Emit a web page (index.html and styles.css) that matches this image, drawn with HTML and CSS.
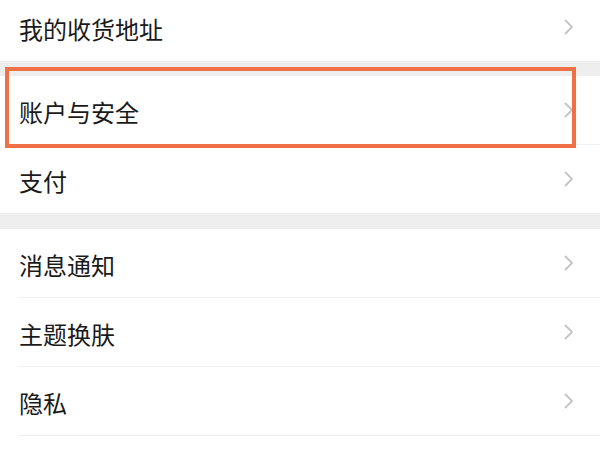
FILE: index.html
```html
<!DOCTYPE html>
<html lang="zh-CN">
<head>
<meta charset="utf-8">
<title>设置</title>
<link rel="stylesheet" href="styles.css">
</head>
<body>
<div class="page">
  <div class="group first">
    <div class="row"><div class="cell"><span class="label">我的收货地址</span><svg class="chev" width="10" height="16" viewBox="0 0 10 16"><polyline points="1.5,1.5 8,8 1.5,14.5"/></svg></div></div>
  </div>
  <div class="gap"></div>
  <div class="group">
    <div class="row"><div class="cell line"><span class="label">账户与安全</span><svg class="chev" width="10" height="16" viewBox="0 0 10 16"><polyline points="1.5,1.5 8,8 1.5,14.5"/></svg></div></div>
    <div class="row"><div class="cell"><span class="label">支付</span><svg class="chev" width="10" height="16" viewBox="0 0 10 16"><polyline points="1.5,1.5 8,8 1.5,14.5"/></svg></div></div>
  </div>
  <div class="gap gap2"></div>
  <div class="group">
    <div class="row"><div class="cell line"><span class="label">消息通知</span><svg class="chev" width="10" height="16" viewBox="0 0 10 16"><polyline points="1.5,1.5 8,8 1.5,14.5"/></svg></div></div>
    <div class="row"><div class="cell line"><span class="label">主题换肤</span><svg class="chev" width="10" height="16" viewBox="0 0 10 16"><polyline points="1.5,1.5 8,8 1.5,14.5"/></svg></div></div>
    <div class="row"><div class="cell line"><span class="label">隐私</span><svg class="chev" width="10" height="16" viewBox="0 0 10 16"><polyline points="1.5,1.5 8,8 1.5,14.5"/></svg></div></div>
  </div>
  <div class="highlight"></div>
</div>
</body>
</html>
```
FILE: styles.css
```css
html, body {
  margin: 0;
  padding: 0;
  background: #ffffff;
  overflow: hidden;
}
.page {
  position: relative;
  width: 600px;
  height: 450px;
  font-family: "Noto Sans CJK SC", "Noto Sans", sans-serif;
}
.group {
  background: #ffffff;
}
.group.first {
  margin-top: -7px;
}
.gap {
  height: 15px;
  background: #eeeeee;
}
.gap2 {
  height: 16px;
}
.row {
  padding-left: 18px;
}
.cell {
  height: 68px;
  display: flex;
  align-items: center;
  justify-content: space-between;
  padding-right: 26px;
  padding-left: 1px;
}
.cell.line {
  border-bottom: 1px solid #f0f0f0;
}
.label {
  font-size: 24px;
  color: #1a1a1a;
  line-height: 1;
  padding-top: 3px;
}
.chev {
  display: block;
}
.chev polyline {
  fill: none;
  stroke: #c4c4c4;
  stroke-width: 1.8;
  stroke-linecap: round;
  stroke-linejoin: round;
}
.highlight {
  position: absolute;
  left: 5px;
  top: 74px;
  width: 563px;
  height: 73px;
  border: 4.5px solid #f07146;
}
```
